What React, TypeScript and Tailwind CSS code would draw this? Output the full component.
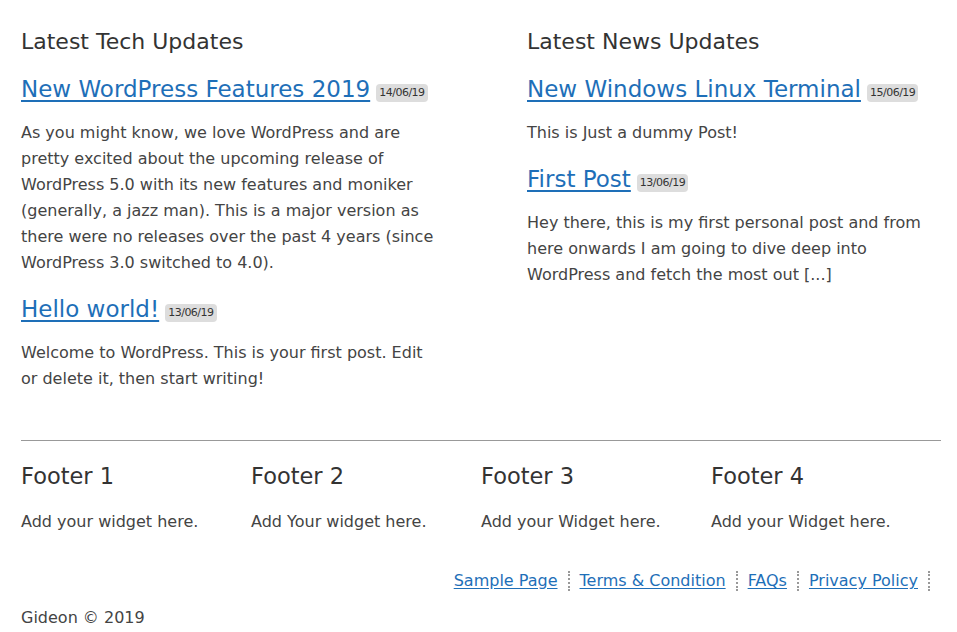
import React from "react";

type Post = { title: string; date: string; body: string };

const TECH: Post[] = [
  {
    title: "New WordPress Features 2019",
    date: "14/06/19",
    body: "As you might know, we love WordPress and are pretty excited about the upcoming release of WordPress 5.0 with its new features and moniker (generally, a jazz man). This is a major version as there were no releases over the past 4 years (since WordPress 3.0 switched to 4.0).",
  },
  {
    title: "Hello world!",
    date: "13/06/19",
    body: "Welcome to WordPress. This is your first post. Edit or delete it, then start writing!",
  },
];

const NEWS: Post[] = [
  { title: "New Windows Linux Terminal", date: "15/06/19", body: "This is Just a dummy Post!" },
  {
    title: "First Post",
    date: "13/06/19",
    body: "Hey there, this is my first personal post and from here onwards I am going to dive deep into WordPress and fetch the most out [...]",
  },
];

const FOOTERS = [
  { title: "Footer 1", text: "Add your widget here." },
  { title: "Footer 2", text: "Add Your widget here." },
  { title: "Footer 3", text: "Add your Widget here." },
  { title: "Footer 4", text: "Add your Widget here." },
];

const LINKS = ["Sample Page", "Terms & Condition", "FAQs", "Privacy Policy"];

function PostList({ heading, posts, width }: { heading: string; posts: Post[]; width: string }) {
  return (
    <section className={`${width} flex-none`}>
      <h2 className="text-[22px] leading-[28px] text-[#333] mb-[18px]">{heading}</h2>
      {posts.map((p) => (
        <article key={p.title} className="mb-[18px]">
          <h3 className="mb-[13px] leading-[30px]">
            <a href="#" className="text-[23px] leading-[30px] text-[#1e6fb8] underline underline-offset-[3px]">
              {p.title}
            </a>
            <span className="ml-[6px] inline-block align-[1px] rounded-[4px] bg-[#ddd] px-[3px] text-[11px] leading-[18px] text-[#333] tracking-[-0.5px]">
              {p.date}
            </span>
          </h3>
          <p className="text-[16px] leading-[26px] text-[#444]">{p.body}</p>
        </article>
      ))}
    </section>
  );
}

export default function App() {
  return (
    <div className="min-h-[632px] bg-white px-[21px] pt-[28px]" style={{ fontFamily: '"DejaVu Sans", sans-serif' }}>
      {/* ── Post columns ─────────────────────────────────────────────── */}
      <div className="flex gap-[86px]">
        <PostList heading="Latest Tech Updates" posts={TECH} width="w-[420px]" />
        <PostList heading="Latest News Updates" posts={NEWS} width="w-[409px]" />
      </div>

      <hr className="mt-[30px] -mr-[5px] border-t border-[#999]" />

      {/* ── Footer widgets ───────────────────────────────────────────── */}
      <div className="grid grid-cols-4 pt-[20px] -mr-[5px]">
        {FOOTERS.map((f) => (
          <div key={f.title}>
            <h4 className="text-[22.5px] leading-[30px] text-[#333] mb-[18px]">{f.title}</h4>
            <p className="text-[16px] leading-[26px] text-[#444]">{f.text}</p>
          </div>
        ))}
      </div>

      <nav className="flex justify-end mt-[34px] pr-[6px]">
        {LINKS.map((l) => (
          <div key={l} className="flex items-center">
            <a href="#" className="text-[16px] leading-[24px] text-[#1e6fb8] underline underline-offset-[2px] px-[10px]">
              {l}
            </a>
            <span className="h-[20px] border-l-2 border-dotted border-[#999]" />
          </div>
        ))}
      </nav>

      <p className="mt-[13px] text-[16px] leading-[24px] text-[#444]">Gideon © 2019</p>
    </div>
  );
}
